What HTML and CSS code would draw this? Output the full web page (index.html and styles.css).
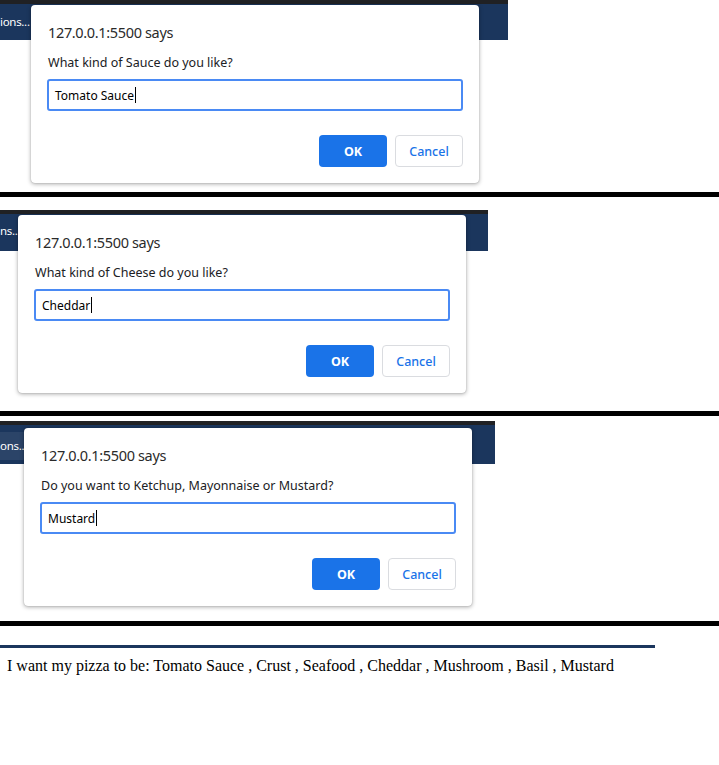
FILE: index.html
```html
<!DOCTYPE html>
<html>
<head>
<meta charset="utf-8">
<title>Pizza</title>
<link rel="stylesheet" href="styles.css">
</head>
<body>
<section class="shot shot1">
  <div class="bar bar1">
    <div class="crumb crumb1">ions...</div>
  </div>
  <div class="dialog dialog1">
    <div class="title">127.0.0.1:5500 says</div>
    <div class="msg">What kind of Sauce do you like?</div>
    <div class="field"><span>Tomato Sauce</span><i class="caret"></i></div>
    <div class="actions"><button class="btn ok">OK</button><button class="btn cancel">Cancel</button></div>
  </div>
</section>
<div class="sep"></div>
<section class="shot shot2">
  <div class="bar bar2">
    <div class="crumb crumb2">ns...</div>
  </div>
  <div class="dialog dialog2">
    <div class="title">127.0.0.1:5500 says</div>
    <div class="msg">What kind of Cheese do you like?</div>
    <div class="field"><span>Cheddar</span><i class="caret"></i></div>
    <div class="actions"><button class="btn ok">OK</button><button class="btn cancel">Cancel</button></div>
  </div>
</section>
<div class="sep"></div>
<section class="shot shot3">
  <div class="bar bar3">
    <div class="crumb crumb3">ons...</div>
  </div>
  <div class="dialog dialog3">
    <div class="title">127.0.0.1:5500 says</div>
    <div class="msg">Do you want to Ketchup, Mayonnaise or Mustard?</div>
    <div class="field"><span>Mustard</span><i class="caret"></i></div>
    <div class="actions"><button class="btn ok">OK</button><button class="btn cancel">Cancel</button></div>
  </div>
</section>
<div class="sep"></div>
<div class="result">
  <div class="rule"></div>
  <p class="answer">I want my pizza to be: Tomato Sauce , Crust , Seafood , Cheddar , Mushroom , Basil , Mustard</p>
</div>
</body>
</html>
```
FILE: styles.css
```css
html, body { margin: 0; padding: 0; background: #fff; }
body { width: 719px; }

.shot { position: relative; }
.shot1 { height: 192px; }
.shot2 { height: 214px; padding-top: 13px; box-sizing: border-box; }
.shot3 { height: 205px; padding-top: 5px; box-sizing: border-box; }

.sep { height: 5px; background: #000; }

.bar {
  background: #1b365d;
  border-top: 4px solid #202124;
  height: 36px;
  display: flex;
  align-items: center;
}
.bar1 { width: 508px; }
.bar2 { width: 488px; height: 37px; }
.bar3 { width: 495px; height: 39px; }

.crumb {
  display: flex;
  align-items: center;
  color: #fff;
  font-family: "Noto Sans", "Open Sans", sans-serif;
  font-size: 11.5px;
  letter-spacing: -0.3px;
  white-space: nowrap;
}
.crumb1 { margin-top: -2px; }
.crumb2 { margin-top: -4px; }
.crumb3 {
  height: 28px;
  margin-top: 2px;
  padding-right: 1px;
  background: #2b4468;
  border-radius: 0 5px 5px 0;
}

.dialog {
  position: absolute;
  width: 448px;
  height: 178px;
  box-sizing: border-box;
  background: #fff;
  border-radius: 4px;
  box-shadow: 0 1px 4px rgba(0,0,0,0.35), 0 0 1px rgba(0,0,0,0.3);
  padding: 16px 16px 0 16px;
  font-family: "Noto Sans", "Open Sans", sans-serif;
  color: #202124;
}
.dialog1 { left: 31px; top: 5px; }
.dialog2 { left: 18px; top: 18px; }
.dialog3 { left: 24px; top: 12px; }

.title {
  font-size: 14.5px;
  letter-spacing: -0.35px;
  line-height: 22px;
  padding-left: 1px;
  color: #2a2a2a;
}
.msg {
  font-size: 12.5px;
  line-height: 18px;
  margin-top: 11px;
  padding-left: 1px;
}
.field {
  margin-top: 7px;
  height: 32px;
  box-sizing: border-box;
  border: 2px solid #4a8af4;
  border-radius: 3px;
  display: flex;
  align-items: center;
  padding-left: 6px;
  font-size: 12px;
  color: #000;
}
.caret {
  display: inline-block;
  width: 1px;
  height: 16px;
  background: #000;
  margin-left: 1px;
}
.actions {
  margin-top: 24px;
  display: flex;
  justify-content: flex-end;
  gap: 8px;
}
.btn {
  width: 68px;
  height: 32px;
  border-radius: 4px;
  font-family: "Noto Sans", "Open Sans", sans-serif;
  font-size: 12.5px;
  padding: 0;
}
.ok {
  background: #1a73e8;
  border: none;
  color: #fff;
  font-weight: 700;
}
.cancel {
  background: #fff;
  border: 1px solid #dadce0;
  color: #1a73e8;
  font-weight: 500;
}

.result { padding-top: 19px; }
.rule { width: 655px; height: 3px; background: #1b365d; }
.answer {
  margin: 9px 0 0 7px;
  font-family: "Liberation Serif", "Times New Roman", serif;
  font-size: 16px;
  line-height: 18px;
  color: #000;
}
```
